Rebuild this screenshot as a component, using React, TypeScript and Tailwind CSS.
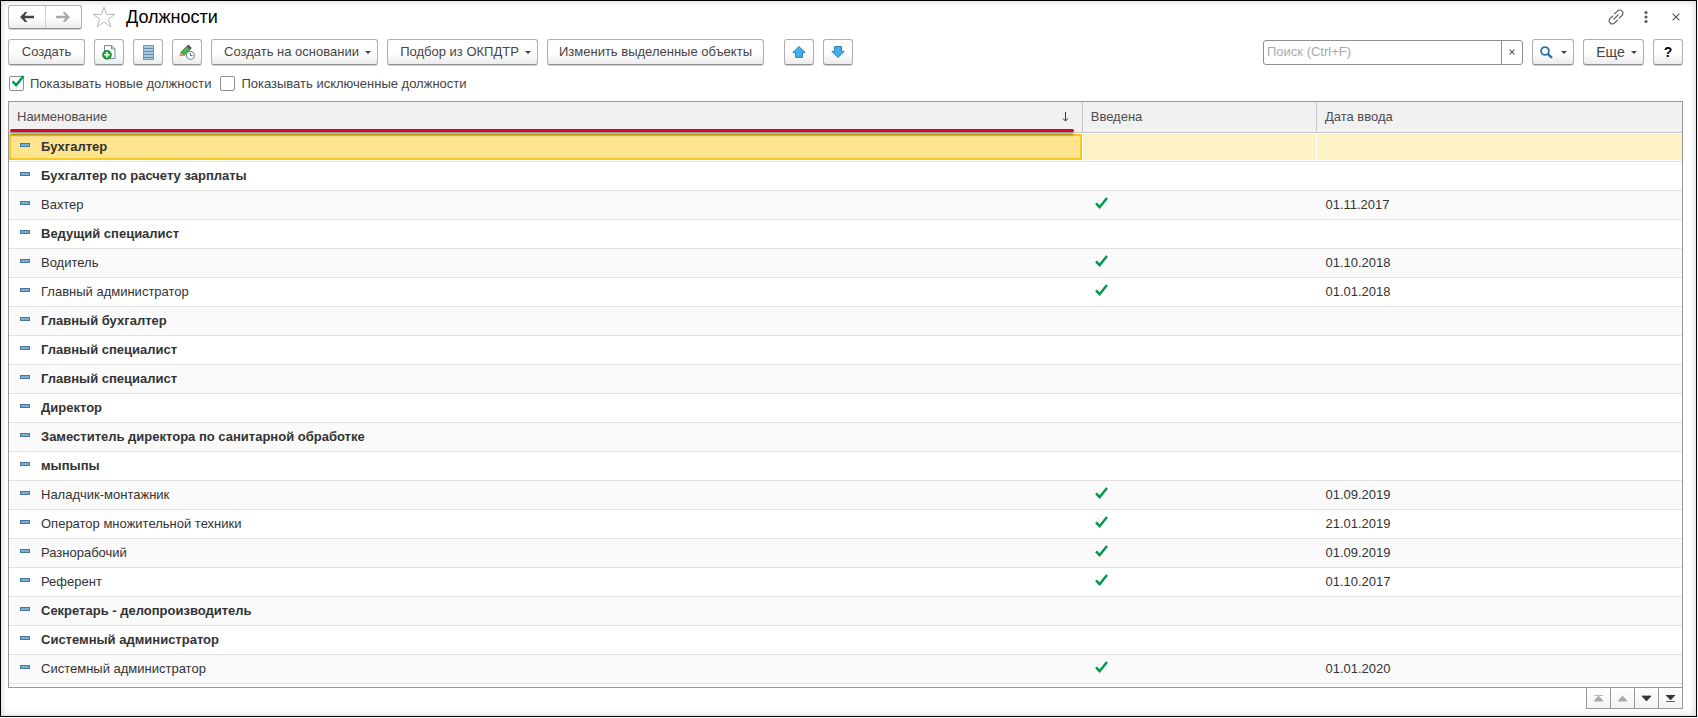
import type { ReactNode } from "react";

type Position = { name: string; isNew?: boolean; date?: string };

const positions: Position[] = [
  { name: "Бухгалтер", isNew: true },
  { name: "Бухгалтер по расчету зарплаты", isNew: true },
  { name: "Вахтер", date: "01.11.2017" },
  { name: "Ведущий специалист", isNew: true },
  { name: "Водитель", date: "01.10.2018" },
  { name: "Главный администратор", date: "01.01.2018" },
  { name: "Главный бухгалтер", isNew: true },
  { name: "Главный специалист", isNew: true },
  { name: "Главный специалист", isNew: true },
  { name: "Директор", isNew: true },
  { name: "Заместитель директора по санитарной обработке", isNew: true },
  { name: "мыпыпы", isNew: true },
  { name: "Наладчик-монтажник", date: "01.09.2019" },
  { name: "Оператор множительной техники", date: "21.01.2019" },
  { name: "Разнорабочий", date: "01.09.2019" },
  { name: "Референт", date: "01.10.2017" },
  { name: "Секретарь - делопроизводитель", isNew: true },
  { name: "Системный администратор", isNew: true },
  { name: "Системный администратор", date: "01.01.2020" },
];

const buttonBase =
  "flex h-[26px] shrink-0 items-center justify-center rounded-[3px] border border-[#b0b0b0] border-b-[#8f8f8f] bg-linear-to-b from-white from-50% to-[#ececec] shadow-[0_1px_0_#d0d0d0]";

function ToolButton({ label, width, children }: { label?: string; width: string; children: ReactNode }) {
  return (
    <button type="button" aria-label={label} className={`${buttonBase} ${width}`}>
      {children}
    </button>
  );
}

function Caret() {
  return (
    <svg width="6" height="3" viewBox="0 0 6 3" fill="#444" className="shrink-0">
      <path d="M0 0h6L3 3z" />
    </svg>
  );
}

function NavArrow({ back, color }: { back?: boolean; color: string }) {
  return (
    <svg width="14" height="10" viewBox="0 0 14 10" fill={color} className={back ? "" : "rotate-180"}>
      <path d="M0 5L5 0H7.4L4.6 3.7H14V6.3H4.6L7.4 10H5z" />
    </svg>
  );
}

function BigArrow({ down }: { down?: boolean }) {
  return (
    <svg width="14" height="12" viewBox="0 0 14 12" className={down ? "rotate-180" : ""}>
      <path d="M7 0.6L13.2 6.6H10.4V11.4H3.6V6.6H0.8z" fill="#41b1ee" stroke="#2b7fae" strokeLinejoin="round" />
    </svg>
  );
}

function CheckMark({ className }: { className: string }) {
  return (
    <svg viewBox="0 0 13 12" fill="none" stroke="#009846" strokeWidth="2.4" className={className}>
      <path d="M1 6.4L4.6 10.2L12 1" />
    </svg>
  );
}

function CheckOption({ id, label, checked }: { id: string; label: string; checked?: boolean }) {
  return (
    <label htmlFor={id} className="flex items-center gap-1.5">
      <span className="relative flex">
        <input
          id={id}
          type="checkbox"
          defaultChecked={checked}
          className="peer size-[15px] appearance-none rounded-[2px] border border-[#8f8f8f] bg-white"
        />
        <CheckMark className="pointer-events-none absolute -top-px left-0.5 hidden h-3 w-3.5 peer-checked:block" />
      </span>
      {label}
    </label>
  );
}

function TitleBar() {
  return (
    <header className="flex h-6 items-center">
      <div className="flex h-6 w-[74px] rounded-[3px] border border-[#b0b0b0] border-b-[#8f8f8f] bg-linear-to-b from-white from-50% to-[#ececec] shadow-[0_1px_0_#d0d0d0]">
        <button type="button" aria-label="Назад" className="flex flex-1 items-center justify-center border-r border-[#cfcfcf]">
          <NavArrow back color="#444" />
        </button>
        <button type="button" aria-label="Вперед" className="flex flex-1 items-center justify-center">
          <NavArrow color="#a9a9a9" />
        </button>
      </div>
      <button type="button" aria-label="В избранное" className="ml-2.5">
        <svg width="24" height="22" viewBox="0 0 24 22" fill="none" stroke="#b4bac0">
          <path d="M12 1.2L14.7 8.4H22.8L16.4 13.1L18.8 20.8L12 16.2L5.2 20.8L7.6 13.1L1.2 8.4H9.3z" />
        </svg>
      </button>
      <h1 className="ml-2.5 text-lg leading-6 text-black">Должности</h1>
      <div className="ml-auto flex items-center text-[#555]">
        <button type="button" aria-label="Ссылка" className="mr-5">
          <svg width="16" height="16" viewBox="0 0 16 16" fill="none" stroke="currentColor" strokeWidth="1.2">
            <path d="M6.2 5.2L9.6 1.8a2.9 2.9 0 0 1 4.3 0.3a2.9 2.9 0 0 1 0.2 4.2L11 9.4" />
            <path d="M9.8 10.8L6.4 14.2a2.9 2.9 0 0 1-4.3-0.3a2.9 2.9 0 0 1-0.2-4.2L5 6.6" />
            <path d="M5.6 10.4L10.4 5.6" />
          </svg>
        </button>
        <button type="button" aria-label="Меню" className="mr-6">
          <svg width="4" height="12" viewBox="0 0 4 12" fill="currentColor">
            <circle cx="2" cy="1.6" r="1.5" />
            <circle cx="2" cy="6" r="1.5" />
            <circle cx="2" cy="10.4" r="1.5" />
          </svg>
        </button>
        <button type="button" aria-label="Закрыть" className="mr-[3px]">
          <svg width="8" height="8" viewBox="0 0 8 8" stroke="currentColor" strokeWidth="1.1">
            <path d="M0.6 0.6l6.8 6.8M7.4 0.6L0.6 7.4" />
          </svg>
        </button>
      </div>
    </header>
  );
}

function Toolbar() {
  return (
    <div className="mt-2.5 flex items-center gap-[9px]">
      <ToolButton width="w-[77px]">Создать</ToolButton>
      <ToolButton label="Создать копированием" width="w-[30px]">
        <svg width="14" height="16" viewBox="0 0 14 16">
          <path d="M2.5 1.5h7l3.5 3.5v9.5H2.5z" fill="#fff" stroke="#6f8ba3" />
          <path d="M9.5 1.5V5H13" fill="none" stroke="#6f8ba3" />
          <circle cx="5" cy="10.8" r="4.5" fill="#1fa03a" stroke="#14802b" strokeWidth="0.6" />
          <path d="M5 8v5.6M2.2 10.8h5.6" stroke="#fff" strokeWidth="1.6" />
        </svg>
      </ToolButton>
      <ToolButton label="Список" width="w-[30px]">
        <svg width="11" height="15" viewBox="0 0 11 15">
          <path d="M0.5 0.5h10v14h-10z" fill="#a9cbe2" stroke="#6f95b2" />
          <path d="M1 3.5h9M1 6.5h9M1 9.5h9M1 12.5h9" stroke="#6189a8" />
        </svg>
      </ToolButton>
      <ToolButton label="Изменить" width="w-[30px]">
        <svg width="16" height="16" viewBox="0 0 16 16">
          <path d="M1 12L2 8L5.4 11.2z" fill="#edb548" stroke="#8c6a2c" strokeWidth="0.6" />
          <path d="M2 8L7.6 2.4L11 5.8L5.4 11.2z" fill="#4caf50" stroke="#2d7a35" strokeWidth="0.7" />
          <path d="M7.6 2.4L9.4 0.6L12.8 4L11 5.8z" fill="#555" />
          <circle cx="11.4" cy="11.4" r="3.9" fill="#fff" stroke="#5f87a6" strokeWidth="1.1" />
          <path d="M11.4 9v2.6h2.2" fill="none" stroke="#44657f" />
        </svg>
      </ToolButton>
      <ToolButton width="w-[167px] gap-1.5 pl-1.5">
        Создать на основании <Caret />
      </ToolButton>
      <ToolButton width="w-[151px] gap-1.5 pl-1.5">
        Подбор из ОКПДТР <Caret />
      </ToolButton>
      <ToolButton width="w-[217px]">Изменить выделенные объекты</ToolButton>
      <div className="ml-[11px] flex gap-[9px]">
        <ToolButton label="Переместить вверх" width="w-[30px]">
          <BigArrow />
        </ToolButton>
        <ToolButton label="Переместить вниз" width="w-[30px]">
          <BigArrow down />
        </ToolButton>
      </div>
      <div className="ml-auto flex h-[25px] w-[260px] rounded-[3px] border border-[#8f8f8f] bg-white">
        <input
          type="text"
          aria-label="Поиск"
          placeholder="Поиск (Ctrl+F)"
          className="min-w-0 flex-1 px-[3px] outline-none placeholder:text-[#a8a8a8]"
        />
        <button type="button" aria-label="Очистить" className="flex w-[21px] items-center justify-center border-l border-[#8f8f8f]">
          <svg width="6" height="6" viewBox="0 0 6 6" stroke="#555" strokeWidth="1.1">
            <path d="M0.6 0.6l4.8 4.8M5.4 0.6L0.6 5.4" />
          </svg>
        </button>
      </div>
      <ToolButton label="Найти" width="w-[42px] gap-2">
        <svg width="13" height="13" viewBox="0 0 13 13" fill="none" stroke="#2673ab">
          <circle cx="5" cy="5" r="3.9" strokeWidth="1.8" />
          <path d="M7.8 7.8L12 12" strokeWidth="2.4" />
        </svg>
        <Caret />
      </ToolButton>
      <ToolButton width="w-[61px] gap-1.5 pl-1.5 text-sm">
        Еще <Caret />
      </ToolButton>
      <ToolButton width="w-[30px] text-sm font-bold text-black">?</ToolButton>
    </div>
  );
}

function PositionRow({ position, index }: { position: Position; index: number }) {
  const selected = index === 0;
  const striped = index % 2 === 0;

  return (
    <tr className={`h-[29px] border-b border-[#e2e2e2] ${striped && !selected ? "bg-[#fafafa]" : "bg-white"}`}>
      <td className="p-0">
        <div
          className={`flex h-[26px] items-center gap-[11px] ${
            selected ? "border-2 border-[#fcc81d] bg-[#fee48d] pl-[9px]" : "pl-[11px]"
          } ${position.isNew ? "font-bold" : ""}`}
        >
          <span className="mb-1 h-1 w-2.5 border border-[#4a7898] bg-[#76afd2]" />
          {position.name}
        </div>
      </td>
      <td className="p-0">
        <div className={`ml-px flex h-[26px] items-center pl-3 ${selected ? "bg-[#fdf1c6]" : ""}`}>
          {position.date && <CheckMark className="mb-1 h-3 w-[13px]" />}
        </div>
      </td>
      <td className="p-0">
        <div className={`ml-px flex h-[26px] items-center pl-2 ${selected ? "bg-[#fdf1c6]" : ""}`}>{position.date}</div>
      </td>
    </tr>
  );
}

function PositionsTable() {
  return (
    <div className="mt-[7px] border border-[#989898] pb-[3px]">
      <table className="w-full table-fixed border-collapse text-[13px] text-[#333]">
        <colgroup>
          <col className="w-[64.15%]" />
          <col className="w-[14%]" />
          <col />
        </colgroup>
        <thead>
          <tr className="h-[31px] border-b border-[#c8c8c8] bg-[#f1f1f1] text-left text-[#4d4d4d]">
            <th className="relative border-r border-[#c8c8c8] px-2 py-0 font-normal">
              <div className="flex items-center justify-between pr-1">
                Наименование
                <svg width="7" height="10" viewBox="0 0 7 10" fill="none" stroke="#333" className="mr-px">
                  <path d="M3.5 0v9M1 6.5l2.5 2.5L6 6.5" />
                </svg>
              </div>
              {/* red marker under the sorted column */}
              <span className="absolute right-2 bottom-0 left-px h-[3px] rounded-full bg-[#d9062b] shadow-[0_3px_3px_rgba(0,0,0,0.4)]" />
            </th>
            <th className="border-r border-[#c8c8c8] px-2 py-0 font-normal">Введена</th>
            <th className="px-2 py-0 font-normal">Дата ввода</th>
          </tr>
        </thead>
        <tbody>
          {positions.map((position, index) => (
            <PositionRow key={index} position={position} index={index} />
          ))}
        </tbody>
      </table>
    </div>
  );
}

const pagerButtons = [
  { label: "В начало", color: "#a9a9a9", path: "M1 0.5h9M5.5 1L10 6H1z" },
  { label: "Назад", color: "#a9a9a9", path: "M5.5 1L10 6H1z" },
  { label: "Вперед", color: "#333333", path: "M1 1h9L5.5 6z" },
  { label: "В конец", color: "#333333", path: "M1 0h9L5.5 5zM1 6.5h9" },
];

function Pager() {
  return (
    <div className="-mt-px ml-auto flex w-fit divide-x divide-[#989898] border border-[#989898]">
      {pagerButtons.map((button) => (
        <button
          key={button.label}
          type="button"
          aria-label={button.label}
          className="flex h-5 w-6 items-center justify-center bg-linear-to-b from-white to-[#f4f4f4] last:w-[23px]"
        >
          <svg width="11" height="7" viewBox="0 0 11 7" fill={button.color} stroke={button.color} strokeWidth="0.8">
            <path d={button.path} />
          </svg>
        </button>
      ))}
    </div>
  );
}

export default function App() {
  return (
    <div className="bg-white pr-px pb-px font-['Liberation_Sans',Arial,sans-serif] text-[13px] text-[#444]">
      <main className="border border-black bg-white px-[7px] pt-1 pr-[13px] pb-[7px] shadow-[inset_0_0_7px_rgba(0,0,0,0.2)]">
        <TitleBar />
        <Toolbar />
        <div className="mt-[9px] ml-px flex items-center gap-[9px]">
          <CheckOption id="show-new" label="Показывать новые должности" checked />
          <CheckOption id="show-excluded" label="Показывать исключенные должности" />
        </div>
        <PositionsTable />
        <Pager />
      </main>
    </div>
  );
}
